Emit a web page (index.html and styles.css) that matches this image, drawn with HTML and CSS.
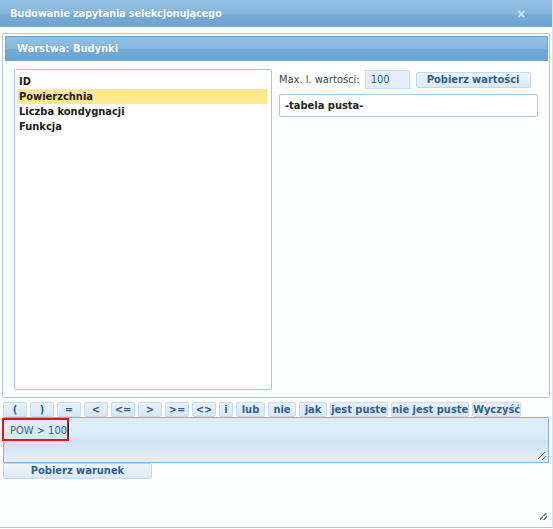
FILE: index.html
```html
<!DOCTYPE html>
<html lang="pl">
<head>
<meta charset="utf-8">
<title>Budowanie zapytania selekcjonującego</title>
<link rel="stylesheet" href="styles.css">
</head>
<body>
<div class="window">
  <div class="titlebar">
    <span class="title">Budowanie zapytania selekcjonującego</span>
    <span class="close">×</span>
  </div>
  <div class="panel">
    <div class="panel-head">Warstwa: Budynki</div>
    <div class="panel-body">
      <ul class="fields">
        <li>ID</li>
        <li class="sel">Powierzchnia</li>
        <li>Liczba kondygnacji</li>
        <li>Funkcja</li>
      </ul>
      <div class="values">
        <div class="max-row">
          <span class="lbl">Max. l. wartości:</span>
          <span class="num">100</span>
          <button class="btn get-values">Pobierz wartości</button>
        </div>
        <div class="table-box">-tabela pusta-</div>
        <div class="values-area"></div>
      </div>
    </div>
  </div>
  <div class="ops">
    <button class="op">(</button>
    <button class="op">)</button>
    <button class="op">=</button>
    <button class="op">&lt;</button>
    <button class="op">&lt;=</button>
    <button class="op">&gt;</button>
    <button class="op">&gt;=</button>
    <button class="op">&lt;&gt;</button>
    <button class="op w14">i</button>
    <button class="op w29">lub</button>
    <button class="op w28">nie</button>
    <button class="op w28">jak</button>
    <button class="op w58">jest puste</button>
    <button class="op w78">nie jest puste</button>
    <button class="op w49">Wyczyść</button>
  </div>
  <div class="query">
    <span class="query-text">POW &gt; 100<span class="caret"></span></span>
    <span class="grip small"></span>
  </div>
  <button class="btn get-cond">Pobierz warunek</button>
  <span class="grip big"></span>
</div>
</body>
</html>
```

FILE: styles.css
```css
* { box-sizing: border-box; }
html, body { margin: 0; padding: 0; }
body {
  background: #fdfefe;
  font-family: "DejaVu Sans Condensed", "DejaVu Sans", sans-serif;
  font-size: 11px;
  color: #222;
}
.window {
  position: relative;
  width: 553px;
  height: 528px;
  border-bottom: 1px solid #a8cbe5;
  border-right: 1px solid #d4e5f2;
  display: flex;
  flex-direction: column;
}
.titlebar {
  height: 27px;
  background: linear-gradient(#95c1e3 0%, #86b6de 50%, #74aad6 55%, #6ca5d3 100%);
  display: flex;
  align-items: center;
  justify-content: space-between;
  padding: 0 26px 0 10px;
  color: #fff;
  font-weight: bold;
}
.title { text-shadow: 0 0 1px #5a8fbd; letter-spacing: -0.2px; }
.close { color: #dde9f3; font-size: 13px; }

.panel {
  margin: 6px 2px 0 2px;
  height: 365px;
  border: 1px solid #a7cbe6;
  border-radius: 2px;
  display: flex;
  flex-direction: column;
}
.panel-head {
  margin: 2px 1px 0 2px;
  height: 25px;
  border: 1px solid #6aa4d4;
  background: linear-gradient(#93c0e3 0%, #86b7de 50%, #74aad6 55%, #6ba4d2 100%);
  color: #fff;
  font-weight: bold;
  padding-left: 11px;
  line-height: 23px;
  text-shadow: 0 0 1px #5a8fbd;
}
.panel-body {
  display: flex;
  padding: 8px 0 0 11px;
  gap: 7px;
}
.fields {
  list-style: none;
  margin: 0;
  padding: 4px 4px 0 2px;
  width: 258px;
  height: 321px;
  border: 1px solid #9fc7e3;
  border-radius: 2px;
  background: #fff;
  font-weight: bold;
  color: #1a1a1a;
}
.fields li {
  height: 15px;
  line-height: 15px;
  padding-left: 2px;
}
.fields li.sel { background: #fde98b; }

.values {
  width: 259px;
  display: flex;
  flex-direction: column;
}
.max-row {
  display: flex;
  align-items: center;
  height: 19px;
  margin-top: 1px;
}
.lbl { color: #444; font-weight: normal; margin-right: 5px; }
.num {
  width: 45px;
  height: 19px;
  line-height: 17px;
  padding-left: 5px;
  border: 1px solid #c9def0;
  background: #e4effa;
  color: #2f5f8f;
}
.btn {
  font-family: inherit;
  font-size: 11px;
  font-weight: bold;
  color: #2d6193;
  background: linear-gradient(#eef5fc, #dde9f6);
  border: 1px solid #c3d8ee;
  border-radius: 2px;
  padding: 0;
  height: 16px;
  line-height: 14px;
  cursor: pointer;
}
.get-values { width: 115px; margin-left: 6px; }
.table-box {
  margin-top: 5px;
  height: 23px;
  width: 259px;
  border: 1px solid #a3c9e5;
  border-radius: 2px;
  background: #fff;
  font-weight: bold;
  color: #222;
  padding-left: 5px;
  line-height: 21px;
}
.values-area {
  margin-top: 8px;
  height: 215px;
  background: #fcfdfd;
}

.ops {
  display: flex;
  gap: 3px;
  margin: 4px 0 0 3px;
  height: 15px;
}
.op {
  font-family: inherit;
  font-size: 11px;
  font-weight: bold;
  color: #2d6193;
  background: linear-gradient(#e8f1fa, #dae7f5);
  border: 1px solid #c9dcef;
  border-radius: 2px;
  height: 15px;
  width: 24px;
  padding: 0;
  line-height: 13px;
  white-space: nowrap;
}
.op.w14 { width: 14px; }
.op.w28 { width: 28px; }
.op.w29 { width: 29px; }
.op.w49 { width: 49px; }
.op.w58 { width: 58px; }
.op.w78 { width: 78px; }

.query {
  position: relative;
  margin: 0 3px 0 3px;
  height: 46px;
  border: 1px solid #7fb3dd;
  background: linear-gradient(#e0ecf8 0%, #dceaf7 48%, #cfe2f4 52%, #e5eff9 100%);
  color: #3b5f84;
}
.query-text {
  position: absolute;
  left: -2px;
  top: 0;
  width: 67px;
  height: 23px;
  border: 2px solid #e3141f;
  padding: 3px 0 0 6px;
  line-height: 14px;
  white-space: nowrap;
}
.caret {
  display: inline-block;
  width: 1px;
  height: 14px;
  margin-left: 1px;
  background: #222;
  vertical-align: -3px;
}
.grip {
  position: absolute;
  right: 2px;
  bottom: 2px;
  width: 8px;
  height: 8px;
  background: linear-gradient(135deg, transparent 0 40%, #4e7aa3 40% 50%, transparent 50% 70%, #4e7aa3 70% 80%, transparent 80%);
}
.grip.big { right: 5px; bottom: 7px; width: 7px; height: 7px; }
.get-cond {
  width: 149px;
  margin-left: 3px;
  height: 16px;
}
```
